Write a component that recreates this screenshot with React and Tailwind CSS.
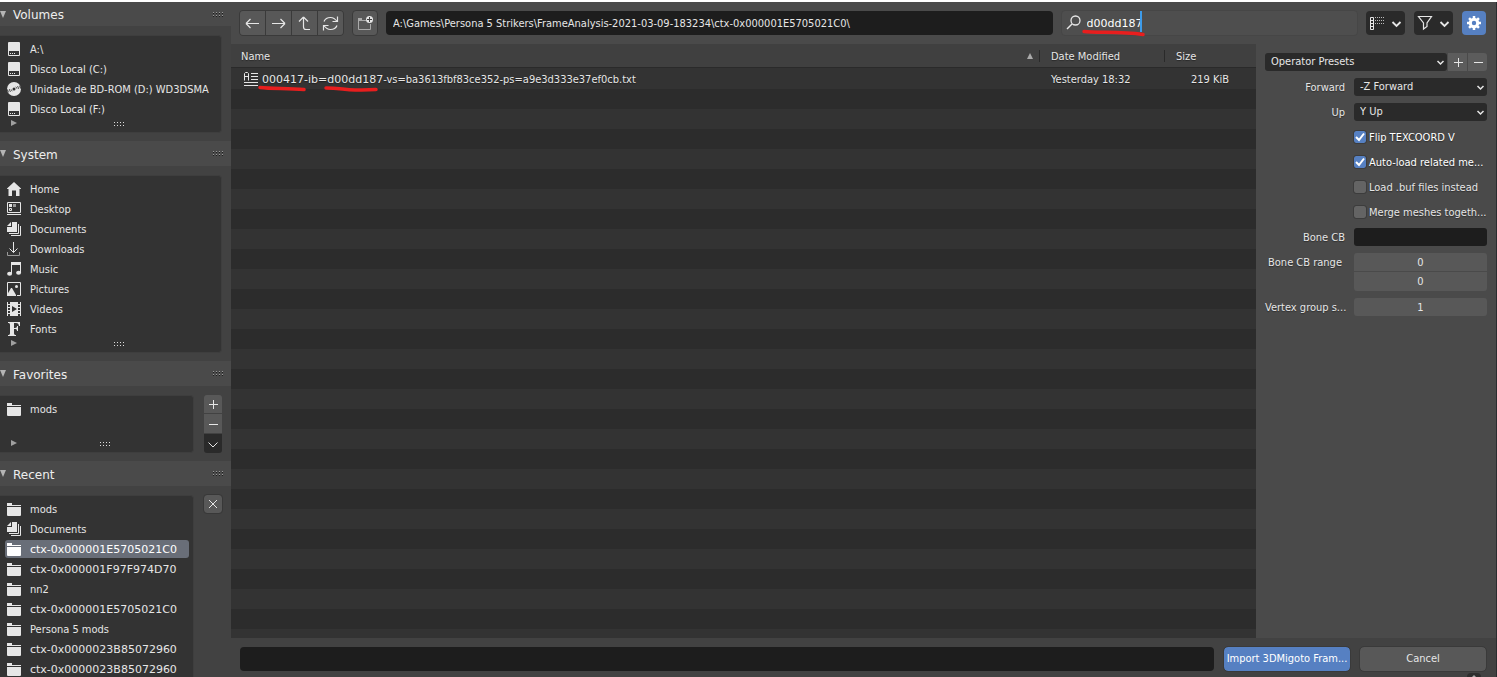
import React from "react";

const INK = "#e6e6e6";

function Icon({ children, size = 16, className = "" }) {
  return (
    <svg
      width={size}
      height={size}
      viewBox={`0 0 ${size} ${size}`}
      fill="none"
      stroke="none"
      aria-hidden="true"
      className={`block shrink-0 ${className}`}
    >
      {children}
    </svg>
  );
}

const DriveIcon = () => (
  <Icon>
    <path fill={INK} d="M3 1h10a1 1 0 0 1 1 1v7H2V2a1 1 0 0 1 1-1z" />
    <path fill={INK} fillRule="evenodd" d="M2 9h12v5a1 1 0 0 1-1 1H3a1 1 0 0 1-1-1zM3 10v4h10v-4z" />
    <path fill={INK} d="M4 12h1v1h-1zM6 12h1v1h-1zM8 12h1v1h-1z" />
  </Icon>
);

const DiscIcon = () => (
  <Icon>
    <circle cx="8" cy="8" r="7" fill={INK} />
    <circle cx="8" cy="8" r="1.5" fill="#333" />
    <path
      stroke="#333"
      d="M1.600 8.500c0 1 .3 2 .8 2.800M3.600 8.200c0 1 .3 1.800.8 2.600M5.400 8.600c.1.7.4 1.200.8 1.600M14.400 7.500c0-1-.3-2-.8-2.800M12.400 7.800c0-1-.3-1.800-.8-2.600M10.600 7.400c-.1-.7-.4-1.200-.8-1.600"
    />
  </Icon>
);

const HomeIcon = () => (
  <Icon>
    <path fill={INK} d="M8 1l7 6.500V8h-1.500v7H10v-5.500H6V15H2.500V8H1v-.500z" />
  </Icon>
);

const DesktopIcon = () => (
  <Icon>
    <path stroke={INK} d="M1.500 1.500h13v10h-13z" />
    <path fill={INK} d="M1 13h14v1H1zM3 3h3v3H3z" />
    <path fill="#999" d="M7 3h3v3H7z" />
    <path stroke={INK} d="M3.500 7.500h2v2h-2z" />
  </Icon>
);

const DocumentsIcon = () => (
  <Icon>
    <path fill={INK} d="M6 1h5v10H1V6h5zM5 1v4H1z" />
    <path stroke={INK} d="M12.500 3v9.500H3M14.500 5v9.500H5" />
  </Icon>
);

const DownloadsIcon = () => (
  <Icon>
    <path stroke={INK} d="M7.500 1v10.500M3.500 7.500l4 4 4-4" />
    <path stroke="#999" d="M1.500 11v3.500h12V11" />
  </Icon>
);

const MusicIcon = () => (
  <Icon>
    <path fill={INK} d="M5 1h10v3H6v8H5zM14 3h1v9h-1z" />
    <ellipse cx="3.600" cy="12.700" rx="2.500" ry="2" fill={INK} />
    <ellipse cx="12.600" cy="11.700" rx="2.500" ry="2" fill={INK} />
  </Icon>
);

const PicturesIcon = () => (
  <Icon>
    <path stroke={INK} d="M1.500 14V1.500h13v13H11" />
    <path fill={INK} d="M1 15v-1l4-7h1l4 7v1z" />
    <circle cx="10.500" cy="5.500" r="1.500" fill={INK} />
  </Icon>
);

const VideosIcon = () => (
  <Icon>
    <path fill={INK} fillRule="evenodd" d="M4 1h8v14H4zM6 5v6l5-3z" />
    <path stroke={INK} d="M1.500 1v14M14.500 1v14" />
    <path stroke={INK} d="M1 3.500h3M1 6.500h3M1 9.500h3M1 12.500h3M12 3.500h3M12 6.500h3M12 9.500h3M12 12.500h3" />
  </Icon>
);

const FontsIcon = () => (
  <Icon>
    <path
      fill={INK}
      d="M2 1h12v4h-1c-.300-2-1-3-3-3H8v5h1c1.500 0 2-.700 2-2h1v5h-1c0-1.500-.500-2-2-2H8v4c0 1.500.500 2 2 2v1H2v-1c1.500 0 2-.500 2-2V4c0-1.500-.500-2-2-2z"
    />
  </Icon>
);

const FolderIcon = ({ active }) => (
  <Icon>
    <path fill={active ? "#ffffff" : INK} d="M1 2h5v2h9v1H1zM1 6h14v8a1 1 0 0 1-1 1H2a1 1 0 0 1-1-1z" />
  </Icon>
);

const TextFileIcon = () => (
  <Icon>
    <path
      stroke={INK}
      d="M1.500 9.500V2.500l1-1h2l1 1v7M1.500 5.500h4M8 2.500h7M8 5.500h7M8 8.500h7M1 11.500h14M1 14.500h14"
    />
  </Icon>
);

const PlusIcon = () => (
  <Icon>
    <path stroke={INK} d="M8.500 4v9M4 8.500h9" />
  </Icon>
);
const MinusIcon = () => (
  <Icon>
    <path stroke={INK} d="M4 8.500h9" />
  </Icon>
);
const CloseIcon = () => (
  <Icon>
    <path stroke={INK} d="M4 4l8 8M12 4l-8 8" />
  </Icon>
);
const ChevronIcon = () => (
  <Icon>
    <path stroke={INK} d="M3.500 6.500l4.500 4.500 4.500-4.500" />
  </Icon>
);

const SmallChevron = ({ className = "" }) => (
  <Icon size={9} className={className}>
    <path stroke={INK} strokeWidth="1.500" d="M1.500 3l3 3 3-3" />
  </Icon>
);

const Caret = () => (
  <Icon size={11}>
    <path stroke={INK} strokeWidth="1.800" d="M1.500 4l4 4 4-4" />
  </Icon>
);

function Grip({ dark }) {
  return (
    <svg width="11" height="5" viewBox="0 0 11 5" aria-hidden="true" className="block shrink-0">
      {dark && <path stroke="#1c1c1c" strokeDasharray="1 2" d="M0 1.500h11M0 4.500h11" />}
      <path stroke={dark ? "#999" : "#ddd"} strokeDasharray="1 2" d="M0 .500h11M0 3.500h11" />
    </svg>
  );
}

function Section({ title, first, children }) {
  return (
    <section className="shrink-0">
      <h2
        className={`flex items-center bg-[#4a4a4a] pr-[7px] font-['DejaVu_Sans',sans-serif] text-[12px] leading-4 text-[#eeeeee] ${first ? "h-6" : "h-[25px]"}`}
      >
        <button type="button" className="flex flex-1 items-center gap-[7px] text-left">
          <svg width="6" height="7" viewBox="0 0 6 7" aria-hidden="true">
            <path fill="#b4b4b4" d="M0 0h6L3 7z" />
          </svg>
          <span className="pt-[2px]">{title}</span>
        </button>
        <Grip dark />
      </h2>
      <div className="flex items-start gap-[10px] pt-[9px] pr-[9px] pb-2">{children}</div>
    </section>
  );
}

function List({ items, spare, footer = true }) {
  return (
    <div className="min-w-0 flex-1 rounded-r-[4px] border border-l-0 border-[#3e3e3e] bg-[#333333] pt-[3px]">
      <ul className={spare ? "pb-5" : ""}>
        {items.map(([icon, label, active], i) => (
          <li key={i} className="flex h-5 items-center pr-1 pl-[5px]">
            <button
              type="button"
              className={`flex h-[18px] w-full items-center gap-2 rounded-[3px] pl-px text-left whitespace-nowrap ${
                active ? "bg-[#696e78] text-white" : ""
              }`}
            >
              {icon}
              <span className={`pt-[2px] ${label.startsWith("ctx") ? "font-['DejaVu_Sans',sans-serif]" : ""}`}>
                {label}
              </span>
            </button>
          </li>
        ))}
      </ul>
      {footer && (
        <div className="flex h-[13px] items-start justify-between pl-[11px]">
          <svg width="6" height="6" viewBox="0 0 6 6" aria-hidden="true" className="mt-px">
            <path fill="#a0a0a0" d="M0 0l6 3-6 3z" />
          </svg>
          <span className="mt-[3px]">
            <Grip />
          </span>
          <span />
        </div>
      )}
    </div>
  );
}

const RECENT = [
  [<FolderIcon />, "mods"],
  [<DocumentsIcon />, "Documents"],
  [<FolderIcon active />, "ctx-0x000001E5705021C0", true],
  [<FolderIcon />, "ctx-0x000001F97F974D70"],
  [<FolderIcon />, "nn2"],
  [<FolderIcon />, "ctx-0x000001E5705021C0"],
  [<FolderIcon />, "Persona 5 mods"],
  [<FolderIcon />, "ctx-0x0000023B85072960"],
  [<FolderIcon />, "ctx-0x0000023B85072960"],
];

function Sidebar() {
  return (
    <aside className="flex w-[231px] shrink-0 flex-col overflow-hidden bg-[#424242]">
      <Section title="Volumes" first>
        <List
          items={[
            [<DriveIcon />, "A:\\"],
            [<DriveIcon />, "Disco Local (C:)"],
            [<DiscIcon />, "Unidade de BD-ROM (D:) WD3DSMA"],
            [<DriveIcon />, "Disco Local (F:)"],
          ]}
        />
      </Section>
      <Section title="System">
        <List
          items={[
            [<HomeIcon />, "Home"],
            [<DesktopIcon />, "Desktop"],
            [<DocumentsIcon />, "Documents"],
            [<DownloadsIcon />, "Downloads"],
            [<MusicIcon />, "Music"],
            [<PicturesIcon />, "Pictures"],
            [<VideosIcon />, "Videos"],
            [<FontsIcon />, "Fonts"],
          ]}
        />
      </Section>
      <Section title="Favorites">
        <List spare items={[[<FolderIcon />, "mods"]]} />
        <div className="flex w-[18px] flex-col gap-px">
          <button type="button" aria-label="Add favorite" className="flex h-[18px] items-center justify-center rounded-t-[3px] bg-[#585858]">
            <PlusIcon />
          </button>
          <button type="button" aria-label="Remove favorite" className="flex h-[19px] items-center justify-center bg-[#585858]">
            <MinusIcon />
          </button>
          <button type="button" aria-label="Favorite options" className="flex h-[19px] items-center justify-center rounded-b-[3px] bg-[#2a2a2a]">
            <ChevronIcon />
          </button>
        </div>
      </Section>
      <Section title="Recent">
        <List items={RECENT} footer={false} />
        <button
          type="button"
          aria-label="Clear recent"
          className="flex h-[18px] w-[18px] items-center justify-center rounded-[3px] bg-[#585858] outline outline-[#383838]"
        >
          <CloseIcon />
        </button>
      </Section>
    </aside>
  );
}

const NAV = [
  ["Back", "M3 12.500h13M3 12.500l4.500-4.500M3 12.500l4.500 4.500"],
  ["Forward", "M16 12.500H3M16 12.500l-4.500-4.500M16 12.500l-4.500 4.500"],
  ["Parent directory", "M8.500 6v10q0 2.500 2.500 2.500H15M8.500 6l-4.500 4.500M8.500 6l4.500 4.500"],
  ["Refresh", "M3 10.500C4 8 6.500 6.500 9.500 6.500c2.500 0 4.500 1 6.500 4M16.500 5.500v5h-5M16 14.500c-1 2.500-3.500 4-6.500 4-2.500 0-4.500-1-6.500-4M2.500 19.500v-5h5"],
];

function Toolbar() {
  return (
    <header className="flex h-[42px] shrink-0 items-center gap-2 bg-[#4a4a4a] pr-[10px] pl-2">
      <nav className="flex shrink-0 gap-px overflow-hidden rounded-[4px] border border-[#3a3a3a] bg-[#3a3a3a]">
        {NAV.map(([label, d]) => (
          <button key={label} type="button" aria-label={label} className="flex h-6 w-[25px] items-center justify-center bg-[#585858]">
            <svg width="19" height="24" viewBox="0 0 19 24" fill="none" aria-hidden="true">
              <path stroke={INK} strokeWidth="1.200" d={d} />
            </svg>
          </button>
        ))}
      </nav>
      <button
        type="button"
        aria-label="New folder"
        className="flex h-[26px] w-[26px] shrink-0 items-center justify-center rounded-[4px] border border-[#3a3a3a] bg-[#585858]"
      >
        <Icon>
          <path stroke="#aaa" d="M1.500 5v9.500h12V9" />
          <path fill="#aaa" d="M1 3h4v2h4v1H1z" />
          <circle cx="12.500" cy="4.500" r="3.500" fill={INK} />
          <path stroke="#444" d="M12.500 2v5M10 4.500h5" />
        </Icon>
      </button>
      <input
        type="text"
        aria-label="Directory path"
        defaultValue={"A:\\Games\\Persona 5 Strikers\\FrameAnalysis-2021-03-09-183234\\ctx-0x000001E5705021C0\\"}
        className="h-6 min-w-0 flex-[665] rounded-[4px] bg-[#1d1d1d] px-[7px] text-[#e6e6e6]"
      />
      <div className="relative flex h-[26px] min-w-0 flex-[297] items-center gap-[5px] rounded-[4px] border border-[#464646] bg-[#4e4e4e] pl-1">
        <Icon>
          <circle cx="9.500" cy="5.500" r="4.500" stroke={INK} strokeWidth="1.300" />
          <path stroke={INK} strokeWidth="1.500" d="M6 9l-5 5" />
        </Icon>
        <input
          type="text"
          aria-label="Search files"
          defaultValue="d00dd187"
          className="h-6 w-full min-w-0 bg-transparent font-['DejaVu_Sans',sans-serif] text-white"
        />
        <span className="absolute top-0 left-[78px] h-[21px] w-[2px] bg-[#3d9be9]" />
        <svg width="64" height="8" viewBox="0 0 64 8" aria-hidden="true" className="absolute top-[18px] left-5">
          <path fill="none" stroke="#e81e1e" strokeWidth="3.500" strokeLinecap="round" d="M2 2.500C14 4 38 2.500 61 5.500" />
        </svg>
      </div>
      <div className="flex shrink-0 gap-[9px]">
        <button type="button" aria-label="Display settings" className="flex h-6 w-[39px] items-center justify-between rounded-[4px] bg-[#2a2a2a] px-[3px]">
          <Icon>
            <path stroke={INK} d="M1.500 2.500h3v12h-3zM1 5.500h4M1 8.500h4M1 11.500h4" />
            <path stroke="#bbb" strokeDasharray="1 1" d="M6 2.500h9M6 5.500h9M6 8.500h9" />
          </Icon>
          <Caret />
        </button>
        <button type="button" aria-label="Filter settings" className="flex h-6 w-[39px] items-center justify-between rounded-[4px] bg-[#2a2a2a] px-[3px]">
          <Icon>
            <path stroke={INK} strokeWidth="1.200" d="M1.500 1.500h13L10 8v3.500L6.500 14V8z" />
          </Icon>
          <Caret />
        </button>
        <button type="button" aria-label="Toggle options" className="flex h-6 w-6 items-center justify-center rounded-[4px] bg-[#5680c2]">
          <Icon>
            <circle cx="8" cy="8" r="3.700" stroke="#fff" strokeWidth="3" />
            <path
              stroke="#fff"
              strokeWidth="2.500"
              d="M8 1v3M8 12v3M1 8h3M12 8h3M3.050 3.050l2 2M10.950 10.950l2 2M3.050 12.950l2-2M10.950 5.050l2-2"
            />
          </Icon>
        </button>
      </div>
    </header>
  );
}

function Files() {
  return (
    <main className="flex min-w-0 flex-1 flex-col bg-[#333333]">
      <table className="w-full table-fixed border-collapse text-left">
        <colgroup>
          <col />
          <col className="w-[125px]" />
          <col className="w-[91px]" />
        </colgroup>
        <thead className="bg-[#404040]">
          <tr className="h-[23px] border-b border-[#2a2a2a]">
            <th scope="col" className="p-0 pt-[2px] font-normal">
              <div className="flex h-3 items-center justify-between border-r border-[#2a2a2a] pr-[6px] pl-[10px]">
                <span className="pt-[2px]">Name</span>
                <svg width="6" height="7" viewBox="0 0 6 7" aria-hidden="true">
                  <path fill="#aaa" d="M3 0l3 6H0z" />
                </svg>
              </div>
            </th>
            <th scope="col" className="p-0 pt-[2px] font-normal">
              <div className="flex h-3 items-center border-r border-[#2a2a2a] pl-[11px]">
                <span className="pt-[2px]">Date Modified</span>
              </div>
            </th>
            <th scope="col" className="p-0 pt-[2px] font-normal">
              <div className="flex h-3 items-center pl-[11px]">
                <span className="pt-[2px]">Size</span>
              </div>
            </th>
          </tr>
        </thead>
        <tbody>
          <tr className="h-[22px]">
            <td className="p-0">
              <div className="relative flex items-center gap-[3px] pt-px pl-3 whitespace-nowrap">
                <TextFileIcon />
                <span className="pt-[2px]">
                  <span className="font-['DejaVu_Sans',sans-serif]">000417-ib=d00dd187</span>
                  -vs=ba3613fbf83ce352-ps=a9e3d333e37ef0cb.txt
                </span>
                <svg width="124" height="8" viewBox="0 0 124 8" aria-hidden="true" className="absolute top-[15px] left-[26px]">
                  <path
                    fill="none"
                    stroke="#e81e1e"
                    strokeWidth="3.500"
                    strokeLinecap="round"
                    d="M3 2.500C15 4 30 3 47 4.500M69 3C82 3 88 5 98 5S114 4.500 119 4.500"
                  />
                </svg>
              </div>
            </td>
            <td className="p-0 pt-[3px] pl-[11px]">Yesterday 18:32</td>
            <td className="p-0 pt-[3px] pr-[27px] text-right">219 KiB</td>
          </tr>
        </tbody>
      </table>
      <div className="flex-1 bg-[repeating-linear-gradient(to_bottom,#2c2c2c_0px,#2c2c2c_20px,#333333_20px,#333333_40px)]" />
    </main>
  );
}

function Select({ id, label, value, className = "" }) {
  return (
    <div className={`relative min-w-0 ${className}`}>
      <select
        id={id}
        aria-label={label}
        defaultValue={value}
        className="block h-[18px] w-full appearance-none rounded-[3px] bg-[#2a2a2a] px-[6px] text-[#e6e6e6]"
      >
        <option>{value}</option>
      </select>
      <SmallChevron className="pointer-events-none absolute top-[5px] right-[2px]" />
    </div>
  );
}

function Field({ id, label, children }) {
  return (
    <div className="grid grid-cols-[80px_minmax(0,1fr)] items-start gap-[9px]">
      <label htmlFor={id} className="h-[18px] text-right leading-5 whitespace-nowrap">
        {label}
      </label>
      {children}
    </div>
  );
}

function Check({ label, checked }) {
  return (
    <label className={`ml-[89px] flex h-[18px] items-center gap-[3px] whitespace-nowrap ${checked ? "text-white" : ""}`}>
      <span className="relative block h-3 w-3 shrink-0">
        <input
          type="checkbox"
          defaultChecked={checked}
          className="block h-3 w-3 appearance-none rounded-[2px] bg-[#646464] outline outline-[#3c3c3c] checked:bg-[#5680c2]"
        />
        {checked && (
          <svg width="12" height="12" viewBox="0 0 12 12" aria-hidden="true" className="pointer-events-none absolute inset-0">
            <path fill="none" stroke="#fff" strokeWidth="2" d="M2 6l3 3 5-6.500" />
          </svg>
        )}
      </span>
      <span className="pt-[2px]">{label}</span>
    </label>
  );
}

const NUMBER = "block w-full min-w-0 bg-[#585858] text-center text-[#e6e6e6]";

function Options() {
  return (
    <aside className="flex w-[240px] shrink-0 flex-col gap-[7px] bg-[#4a4a4a] px-[9px] pt-[9px]">
      <div className="flex gap-px">
        <Select label="Operator presets" value="Operator Presets" className="flex-1" />
        <button type="button" aria-label="Add preset" className="flex h-[18px] w-[19px] items-center justify-center bg-[#5c5c5c]">
          <PlusIcon />
        </button>
        <button type="button" aria-label="Remove preset" className="flex h-[18px] w-[19px] items-center justify-center rounded-r-[3px] bg-[#5c5c5c]">
          <MinusIcon />
        </button>
      </div>
      <Field id="forward" label="Forward">
        <Select id="forward" value="-Z Forward" />
      </Field>
      <Field id="up" label="Up">
        <Select id="up" value="Y Up" />
      </Field>
      <Check label="Flip TEXCOORD V" checked />
      <Check label="Auto-load related me..." checked />
      <Check label="Load .buf files instead" />
      <Check label="Merge meshes togeth..." />
      <Field id="bone-cb" label="Bone CB">
        <input id="bone-cb" type="text" className="block h-[18px] w-full min-w-0 rounded-[3px] bg-[#1d1d1d] px-[6px]" />
      </Field>
      <Field id="range-start" label={<span className="pr-[3px]">Bone CB range</span>}>
        <div className="flex flex-col gap-px">
          <input id="range-start" type="text" defaultValue="0" className={`${NUMBER} h-[18px] rounded-t-[3px]`} />
          <input aria-label="Bone CB range end" type="text" defaultValue="0" className={`${NUMBER} h-[19px] rounded-b-[3px]`} />
        </div>
      </Field>
      <Field id="vertex-group" label="Vertex group s...">
        <input id="vertex-group" type="text" defaultValue="1" className={`${NUMBER} h-[18px] rounded-[3px]`} />
      </Field>
    </aside>
  );
}

function Footer() {
  return (
    <footer className="relative flex h-[39px] shrink-0 items-start gap-[10px] bg-[#424242] pt-[9px] pr-[10px] pl-[9px]">
      <input type="text" aria-label="File name" className="h-6 min-w-0 flex-1 rounded-[4px] bg-[#1d1d1d] px-[7px] text-[#e6e6e6]" />
      <button type="button" className="h-6 w-[126px] shrink-0 rounded-[4px] bg-[#5680c2] whitespace-nowrap text-white outline outline-[#3a3a3a]">
        Import 3DMigoto Fram...
      </button>
      <button type="button" className="h-6 w-[126px] shrink-0 rounded-[4px] bg-[#585858] outline outline-[#3a3a3a]">
        Cancel
      </button>
      <svg width="14" height="4" viewBox="0 0 14 4" aria-hidden="true" className="absolute right-[15px] bottom-0">
        <path fill="#2e2e2e" d="M0 4q0-4 4-4h6q4 0 4 4z" />
        <path fill="#aaa" d="M5 4l2-2 2 2z" />
      </svg>
    </footer>
  );
}

export default function App() {
  return (
    <div className="flex h-screen flex-col overflow-hidden border-t-2 border-white bg-[#424242] font-['DejaVu_Sans_Condensed','DejaVu_Sans',sans-serif] text-[11px] leading-[14px] text-[#e6e6e6] [text-shadow:0_1px_1px_rgba(0,0,0,0.4)]">
      <div className="flex min-h-0 flex-1">
        <Sidebar />
        <div className="flex min-w-0 flex-1 flex-col border-r border-[#2a2d2f]">
          <Toolbar />
          <div className="flex min-h-0 flex-1">
            <Files />
            <Options />
          </div>
          <Footer />
        </div>
      </div>
    </div>
  );
}
